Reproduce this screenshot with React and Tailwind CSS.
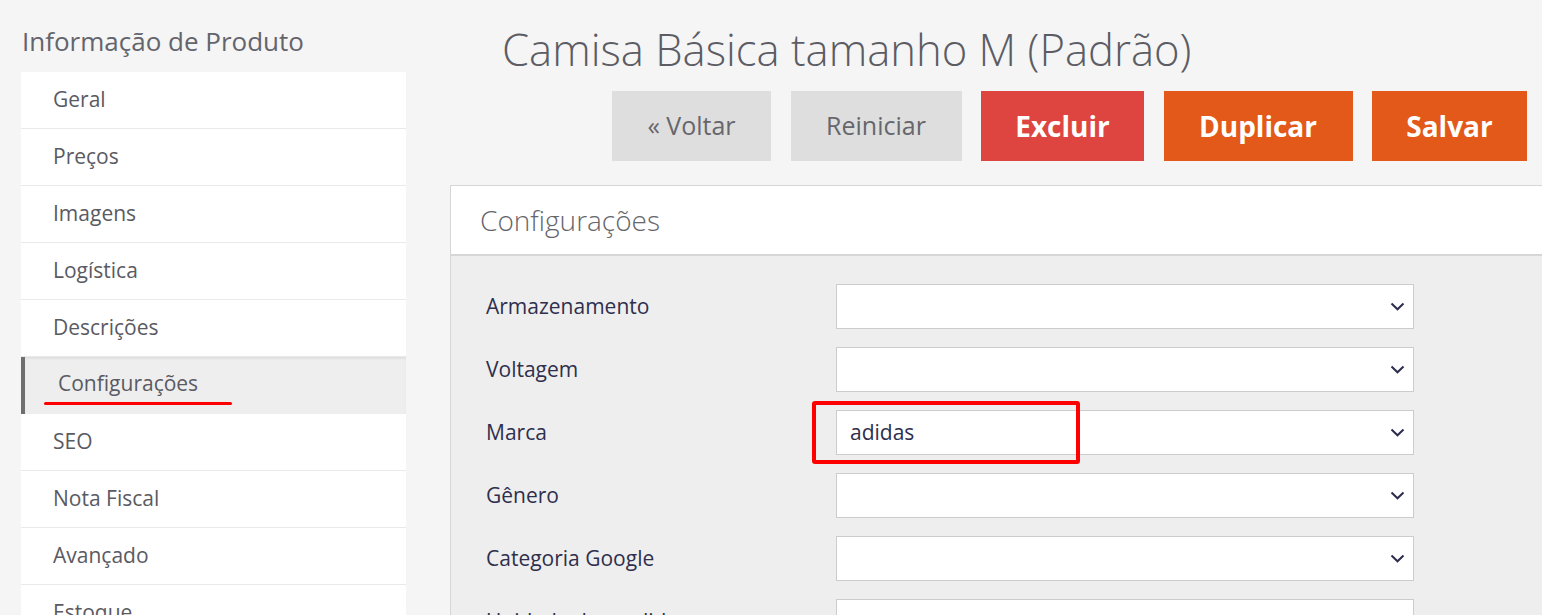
import React from 'react';

const menu = ['Geral', 'Preços', 'Imagens', 'Logística', 'Descrições', 'Configurações', 'SEO', 'Nota Fiscal', 'Avançado', 'Estoque'];

const fields = [
  { label: 'Armazenamento', value: '' },
  { label: 'Voltagem', value: '' },
  { label: 'Marca', value: 'adidas', marked: true },
  { label: 'Gênero', value: '' },
  { label: 'Categoria Google', value: '' },
  { label: 'Unidade de medida', value: '' },
];

const Chevron = () => (
  <svg width="15" height="9" viewBox="0 0 15 9" fill="none" className="shrink-0">
    <path d="M1.5 1.5 L7.5 7.3 L13.5 1.5" stroke="#2b2d4c" strokeWidth="2" />
  </svg>
);

const App = () => {
  return (
    <div className="min-h-screen bg-[#f5f5f5] flex overflow-hidden font-['Open_Sans',sans-serif]" style={{ height: 615 }}>
      {/* menu lateral */}
      <aside className="ml-[21px] w-[385px] shrink-0 pt-[23px]">
        <h2 className="text-[26px] leading-[36px] text-[#64646c] pl-[1px]">Informação de Produto</h2>
        <ul className="mt-[13px] bg-white">
          {menu.map((item) => {
            const active = item === 'Configurações';
            return (
              <li
                key={item}
                className={
                  active
                    ? 'relative h-[57px] flex items-center bg-[#eeeeee] border-l-4 border-[#6f6f6f] pl-[33px] pb-[3px] text-[21px] text-[#5a5a62] shadow-[inset_0_2px_2px_rgba(0,0,0,0.06)]'
                    : 'h-[57px] flex items-center border-b border-[#e9e9e9] pl-[32px] text-[21px] text-[#5a5a62]'
                }
              >
                {item}
                {active && (
                  <span className="absolute left-[19px] top-[45px] w-[188px] h-[3px] rounded-full bg-[#ff0000]" />
                )}
              </li>
            );
          })}
        </ul>
      </aside>

      {/* conteúdo */}
      <main className="ml-[44px] flex-1 pt-[20px] min-w-0">
        <h1 className="pl-[52px] text-[43.6px] leading-[58px] font-light text-[#5c5c64] whitespace-nowrap">
          Camisa Básica tamanho M (Padrão)
        </h1>

        <div className="mt-[13px] pr-[15px] flex justify-end gap-[19.5px]">
          <button className="w-[159px] h-[70px] bg-[#dedede] text-[25px] text-[#66666c]">« Voltar</button>
          <button className="w-[171px] h-[70px] bg-[#dedede] text-[25px] text-[#66666c]">Reiniciar</button>
          <button className="w-[163px] h-[70px] bg-[#de4541] text-[28px] font-bold text-white">Excluir</button>
          <button className="w-[189px] h-[70px] bg-[#e2591a] text-[28px] font-bold text-white">Duplicar</button>
          <button className="w-[155px] h-[70px] bg-[#e2591a] text-[28px] font-bold text-white">Salvar</button>
        </div>

        <section className="mt-[24px] border border-r-0 border-[#d6d6d6] bg-[#eeeeee]">
          <div className="h-[70px] flex items-center pl-[29px] bg-white border-b-2 border-[#d6d6d6]">
            <h3 className="text-[28px] font-light text-[#66666c]">Configurações</h3>
          </div>
          <div className="pt-[28px] pl-[35px] flex flex-col gap-[18px]">
            {fields.map((f) => (
              <div key={f.label} className="flex items-center">
                <label className="w-[350px] text-[21px] text-[#2e2f4d]">{f.label}</label>
                <div className="relative">
                  <div className="w-[578px] h-[45px] bg-white border border-[#cccccc] flex items-center justify-between pl-[13px] pr-[8px]">
                    <span className="text-[21px] text-[#2e2f4d]">{f.value}</span>
                    <Chevron />
                  </div>
                  {f.marked && (
                    <span className="absolute left-[-24px] top-[-9px] w-[268px] h-[63px] border-4 border-[#ff0000] rounded-[3px]" />
                  )}
                </div>
              </div>
            ))}
          </div>
        </section>
      </main>
    </div>
  );
};

export default App;
